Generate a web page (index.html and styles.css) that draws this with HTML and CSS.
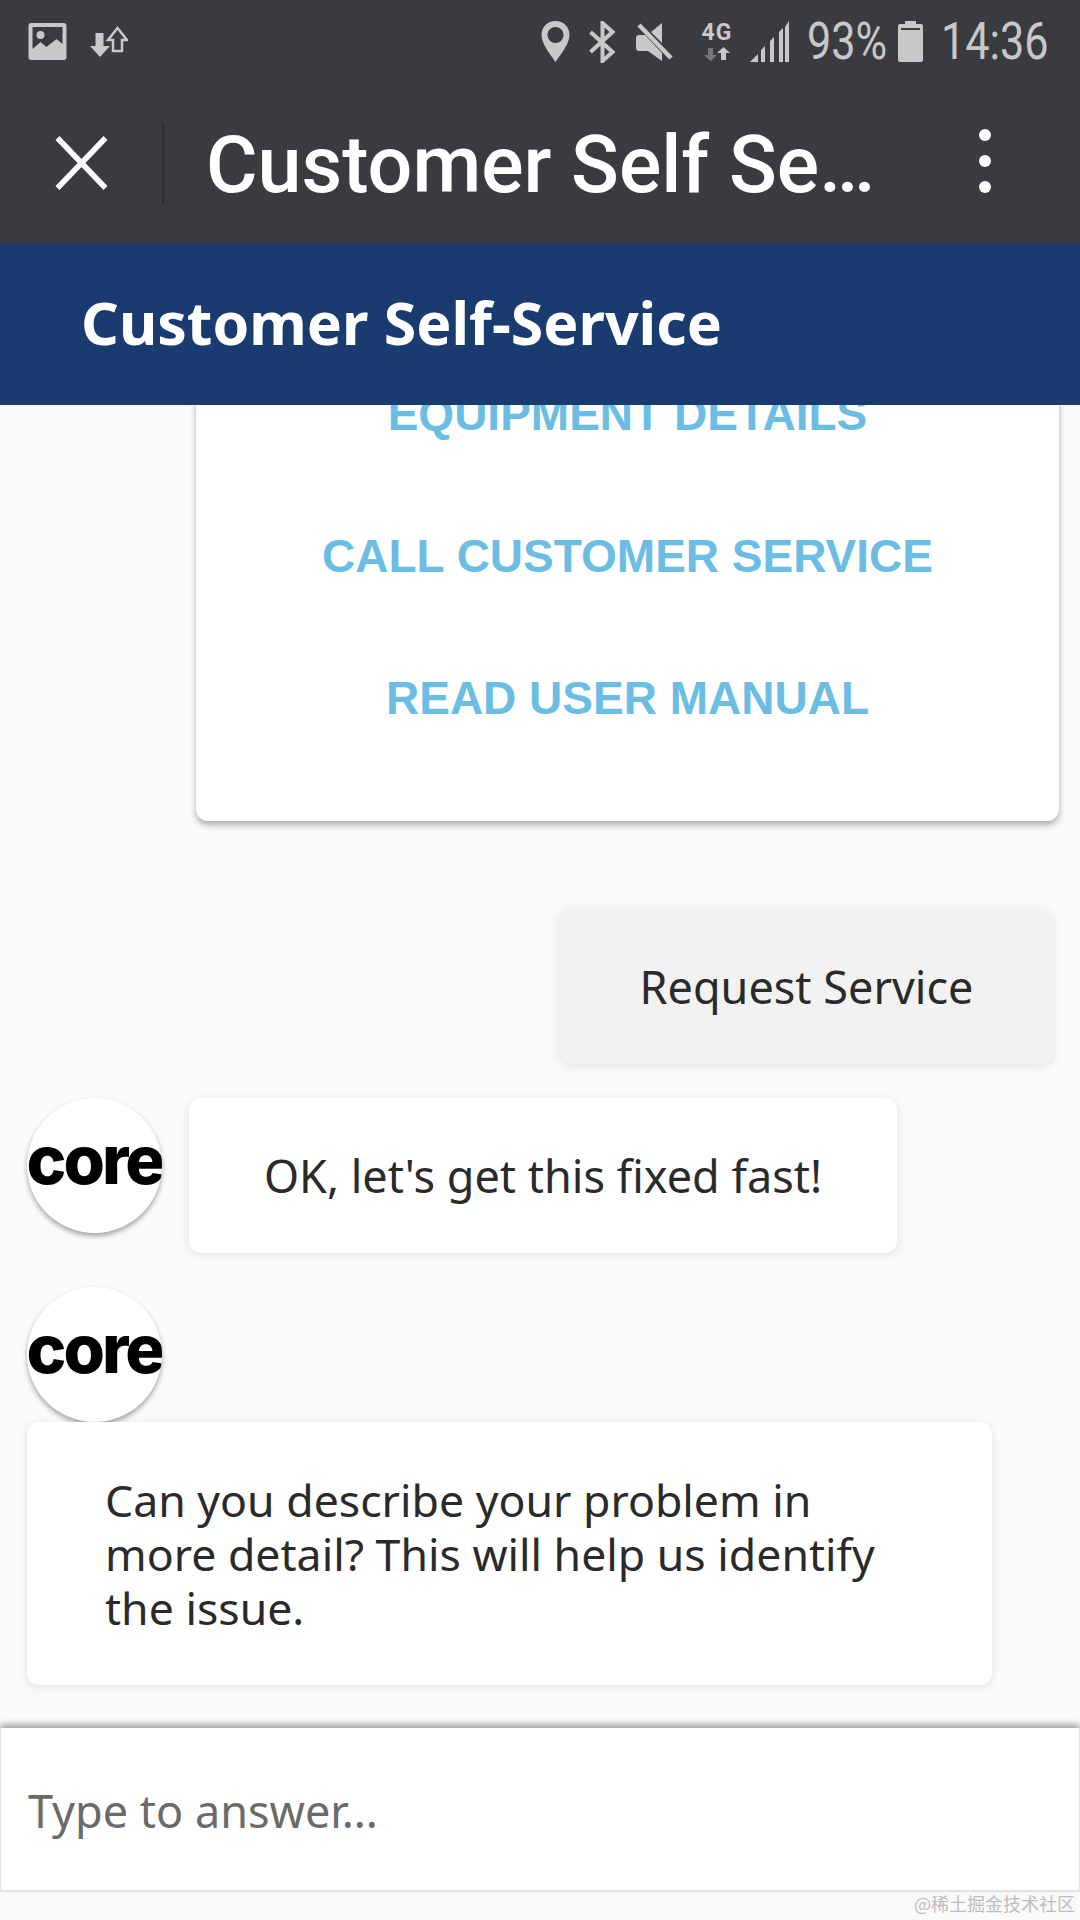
FILE: index.html
```html
<!DOCTYPE html>
<html lang="en">
<head>
  <meta charset="UTF-8">
  <meta name="viewport" content="width=device-width, initial-scale=1.0">
  <title>Customer Self-Service</title>
  <link rel="stylesheet" href="styles.css">
</head>
<body>
  <div class="app">
    <div class="status_bar">
      <div class="status_group">
        <svg class="icon_image" viewBox="0 0 38 37">
          <path fill="#c8c8c8" fill-rule="evenodd" d="M3 0h32a3 3 0 0 1 3 3v31a3 3 0 0 1-3 3H3a3 3 0 0 1-3-3V3a3 3 0 0 1 3-3zm1 4v22l8-7 6 5 10-8 6 5V4z"/>
          <circle cx="12" cy="12" r="4" fill="#c8c8c8"/>
        </svg>
        <svg class="icon_data" viewBox="0 0 39 32">
          <path fill="#c8c8c8" d="M6.500 7h8v13H21L11 31 1 20h5.500z"/>
          <path fill="none" stroke="#c8c8c8" stroke-width="2.500" d="M24 25V14h-5L28.500 2 38 14h-5v11z"/>
        </svg>
      </div>
      <div class="status_group">
        <svg class="icon_location" viewBox="0 0 28 41">
          <path fill="#c8c8c8" fill-rule="evenodd" d="M14 0c8 0 14 6 14 14 0 8-7 17-14 27C7 31 0 22 0 14 0 6 6 0 14 0zm0 6a8 8 0 1 0 0 16 8 8 0 0 0 0-16z"/>
        </svg>
        <svg class="icon_bluetooth" viewBox="0 0 25 42">
          <path fill="none" stroke="#c8c8c8" stroke-width="4" d="M1 11l22 20-10 9V2l10 9L1 31"/>
        </svg>
        <svg class="icon_mute" viewBox="0 0 37 40">
          <path fill="#c8c8c8" d="M3 13h6l17 18v8L12 29H3a3 3 0 0 1-3-3v-10a3 3 0 0 1 3-3zM15 10L26 1v20z"/>
          <path fill="none" stroke="#c8c8c8" stroke-width="4.500" d="M3 3l32 33"/>
        </svg>
        <div class="network">
          <span class="network_label">4G</span>
          <svg class="icon_updown" viewBox="0 0 26 14">
            <path fill="#77787b" d="M4 1h5v7h4l-6.500 6L0 8h4z"/>
            <path fill="#c8c8c8" d="M17 13h5V6h4l-6.500-6L13 6h4z"/>
          </svg>
        </div>
        <svg class="icon_signal" viewBox="0 0 39 41">
          <path fill="#c8c8c8" d="M0 41l8-8v8zM11 41V29l4-4v16zM20 41V20l4-4v25zM29 41V11l4-4v34zM35 41V6l4-6v41z"/>
        </svg>
        <span class="status_text battery_text">93%</span>
        <svg class="icon_battery" viewBox="0 0 25 41">
          <path fill="#c8c8c8" fill-rule="evenodd" d="M7 0h11v3h5a2 2 0 0 1 2 2v34a2 2 0 0 1-2 2H2a2 2 0 0 1-2-2V5a2 2 0 0 1 2-2h5zM3 7v2h19V7z"/>
        </svg>
        <span class="status_text time_text">14:36</span>
      </div>
    </div>

    <div class="toolbar">
      <svg class="icon_close" viewBox="0 0 52 54">
        <path fill="none" stroke="#fff" stroke-width="5.500" d="M2 2l48 50M50 2L2 52"/>
      </svg>
      <div class="toolbar_divider"></div>
      <div class="toolbar_title">Customer Self Service</div>
      <div class="menu_dots"><span></span><span></span><span></span></div>
    </div>

    <div class="page_header">Customer Self-Service</div>

    <div class="chat">
      <div class="link_card">
        <div class="card_link">EQUIPMENT DETAILS</div>
        <div class="card_link">CALL CUSTOMER SERVICE</div>
        <div class="card_link">READ USER MANUAL</div>
      </div>

      <div class="user_row">
        <div class="bubble bubble_user">Request Service</div>
      </div>

      <div class="bot_row">
        <div class="avatar"><span>core</span></div>
        <div class="bubble bubble_bot">OK, let's get this fixed fast!</div>
      </div>

      <div class="bot_stack">
        <div class="avatar"><span>core</span></div>
        <div class="bubble bubble_wide">Can you describe your problem in more detail? This will help us identify the issue.</div>
      </div>
    </div>

    <div class="answer_box">Type to answer...</div>
    <div class="app_footer"></div>
  </div>
  <div class="watermark">@稀土掘金技术社区</div>
</body>
</html>
```

FILE: styles.css
```css
* {
  box-sizing: border-box;
}

body {
  margin: 0;
  background-color: #fafafa;
  font-family: "Noto Sans", sans-serif;
}

.app {
  display: flex;
  flex-direction: column;
  width: 1080px;
  height: 1920px;
  overflow: hidden;
}

/* Barra de status */
.status_bar {
  display: flex;
  justify-content: space-between;
  align-items: center;
  height: 83px;
  padding: 0 30px 0 28px;
  background-color: #3a3b40;
  flex: none;
}

.status_group {
  display: flex;
  align-items: center;
}

.status_group svg {
  display: block;
  flex: none;
}

.icon_image { width: 39px; height: 37px; }
.icon_data { width: 39px; height: 32px; margin-left: 22px; }
.icon_location { width: 29px; height: 41px; }
.icon_bluetooth { width: 26px; height: 42px; margin-left: 19px; }
.icon_mute { width: 37px; height: 40px; margin-left: 21px; }
.icon_signal { width: 41px; height: 41px; margin-left: 16px; }
.icon_battery { width: 27px; height: 41px; margin-left: 11px; }

.network {
  display: flex;
  flex-direction: column;
  align-items: center;
  margin-left: 28px;
  width: 32px;
}

.network_label {
  color: #c8c8c8;
  font-family: "Roboto", sans-serif;
  font-size: 23px;
  font-weight: 700;
  line-height: 22px;
  letter-spacing: 1px;
}

.icon_updown {
  width: 28px;
  height: 14px;
  margin-top: 3px;
}

.status_text {
  color: #c8c8c8;
  font-family: "Roboto", sans-serif;
  font-size: 52px;
  line-height: 52px;
  display: inline-block;
  transform: scaleX(0.83);
  transform-origin: left center;
  white-space: nowrap;
}

.battery_text {
  width: 79px;
  margin-left: 17px;
}

.time_text {
  width: 109px;
  margin-left: 17px;
}

/* Barra do navegador */
.toolbar {
  display: flex;
  align-items: center;
  height: 160px;
  padding-left: 55px;
  background-color: #3a3b40;
  flex: none;
}

.icon_close {
  width: 53px;
  height: 54px;
  flex: none;
}

.toolbar_divider {
  width: 2px;
  height: 81px;
  margin-left: 54px;
  background-color: #2e2f33;
  flex: none;
}

.toolbar_title {
  width: 678px;
  margin-left: 42px;
  padding-top: 4px;
  color: #fff;
  font-family: "Roboto", sans-serif;
  font-size: 79px;
  font-weight: 500;
  white-space: nowrap;
  overflow: hidden;
  text-overflow: ellipsis;
}

.menu_dots {
  display: flex;
  flex-direction: column;
  gap: 14px;
  margin: 0 0 4px 95px;
}

.menu_dots span {
  display: block;
  width: 12px;
  height: 12px;
  border-radius: 50%;
  background-color: #fff;
}

.page_header {
  position: relative;
  z-index: 2;
  height: 162px;
  padding-left: 81px;
  background-color: #193b70;
  color: #fff;
  font-size: 59px;
  font-weight: 700;
  line-height: 158px;
  flex: none;
}

/* Conversa */
.chat {
  flex: 1;
  min-height: 0;
  overflow: hidden;
  display: flex;
  flex-direction: column;
}

.link_card {
  width: 863px;
  margin: -62px 0 0 196px;
  padding-bottom: 52px;
  background-color: #fff;
  border-radius: 12px;
  box-shadow: 0 4px 6px rgba(0, 0, 0, 0.3);
  flex: none;
}

.card_link {
  height: 142px;
  color: #6cbde4;
  font-family: "Liberation Sans", Arial, sans-serif;
  font-size: 46px;
  font-weight: 700;
  line-height: 142px;
  text-align: center;
}

.bubble {
  border-radius: 12px;
  color: #2a2a2a;
  font-size: 45px;
  background-color: #fff;
  box-shadow: 0 2px 10px rgba(0, 0, 0, 0.1);
}

.user_row {
  display: flex;
  justify-content: flex-end;
  margin-top: 88px;
  padding-right: 27px;
  flex: none;
}

.bubble_user {
  display: flex;
  align-items: center;
  justify-content: center;
  width: 493px;
  height: 155px;
  background-color: #f2f2f2;
}

.bot_row {
  display: flex;
  margin-top: 34px;
  padding-left: 27px;
  gap: 27px;
  flex: none;
}

.bubble_bot {
  display: flex;
  align-items: center;
  justify-content: center;
  width: 708px;
  height: 155px;
}

.bot_stack {
  margin-top: 34px;
  padding-left: 27px;
  flex: none;
}

.bubble_wide {
  width: 965px;
  height: 263px;
  padding: 51px 90px 0 78px;
  font-size: 44.600px;
  line-height: 54px;
}

.avatar {
  display: flex;
  align-items: center;
  justify-content: center;
  width: 135px;
  height: 135px;
  padding-bottom: 12px;
  border-radius: 50%;
  overflow: hidden;
  background-color: #fff;
  box-shadow: 0 3px 5px rgba(0, 0, 0, 0.35);
  flex: none;
}

.avatar span {
  color: #000;
  font-family: "Inter", sans-serif;
  font-size: 67px;
  font-weight: 800;
  letter-spacing: -3px;
  line-height: 1;
}

.answer_box {
  position: relative;
  height: 164px;
  padding-left: 27px;
  background-color: #fff;
  border-left: 1px solid #e5e5e5;
  border-right: 1px solid #e5e5e5;
  border-bottom: 2px solid #e2e2e2;
  box-shadow: 0 -4px 6px rgba(0, 0, 0, 0.32);
  color: #6a6a6a;
  font-size: 45px;
  line-height: 166px;
  flex: none;
}

.app_footer {
  height: 28px;
  flex: none;
}

.watermark {
  position: absolute;
  top: 1889px;
  right: 5px;
  color: #bdbdbd;
  font-family: "Noto Sans CJK SC", sans-serif;
  font-size: 18px;
  line-height: 28px;
}
```
